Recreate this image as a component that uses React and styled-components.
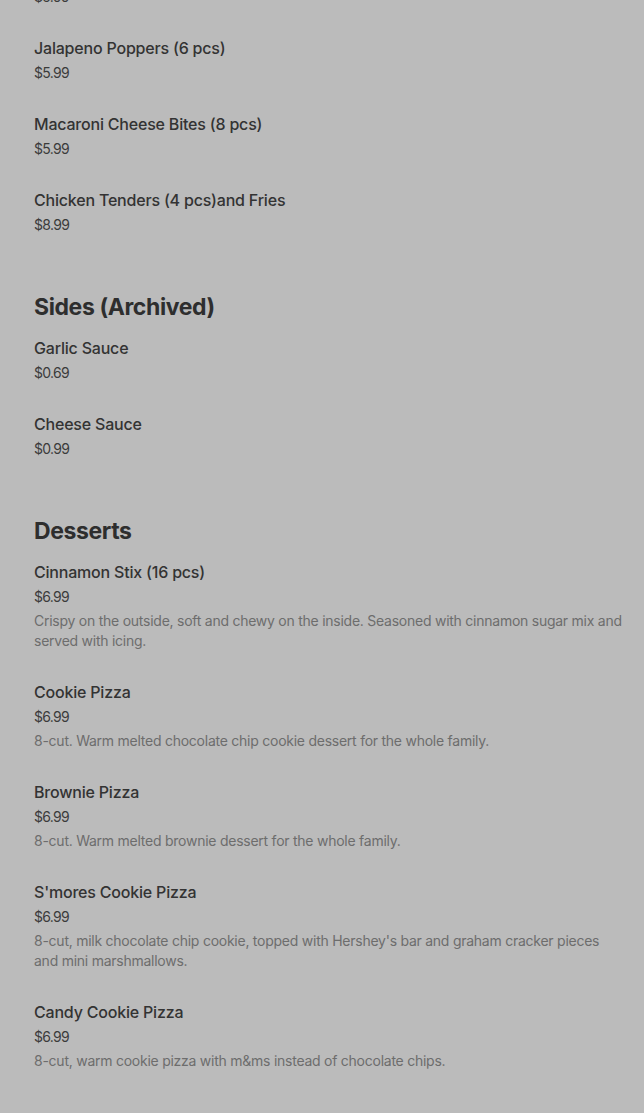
import React from "react";
import styled, { createGlobalStyle } from "styled-components";

const Global = createGlobalStyle`
  html, body { margin: 0; padding: 0; background: #bbbbbb; }
  body { font-family: Inter, "Noto Sans", sans-serif; -webkit-font-smoothing: antialiased; }
  #root { overflow: hidden; height: 1113px; }
`;

const Page = styled.main`
  display: flex;
  flex-direction: column;
  gap: 55px;
  padding: 0 19px 40px 34px;
  margin-top: -40px;
`;

const Section = styled.section`
  display: flex;
  flex-direction: column;
  gap: 14px;
`;

const Heading = styled.h2`
  margin: 0;
  font-size: 23px;
  line-height: 32px;
  font-weight: 700;
  letter-spacing: -0.4px;
  color: #2e2e2e;
  transform: translateY(1px);
`;

const List = styled.ul`
  list-style: none;
  margin: 0;
  padding: 0;
  display: flex;
  flex-direction: column;
  gap: 29px;
`;

const Item = styled.li`
  display: flex;
  flex-direction: column;
`;

const Name = styled.div`
  font-size: 16px;
  line-height: 24px;
  font-weight: 500;
  color: #333333;
  letter-spacing: -0.2px;
`;

const Price = styled.div`
  margin-top: 3px;
  font-size: 14px;
  line-height: 20px;
  color: #3b3b3b;
  letter-spacing: -0.7px;
`;

const Desc = styled.p`
  margin: 4px 0 0;
  font-size: 14px;
  line-height: 20px;
  color: #6d6d6d;
  letter-spacing: -0.25px;
`;

const sections = [
  {
    items: [
      { name: "Mozzarella Sticks (6 pcs)", price: "$5.99" },
      { name: "Jalapeno Poppers (6 pcs)", price: "$5.99" },
      { name: "Macaroni Cheese Bites (8 pcs)", price: "$5.99" },
      { name: "Chicken Tenders (4 pcs)and Fries", price: "$8.99" },
    ],
  },
  {
    title: "Sides (Archived)",
    items: [
      { name: "Garlic Sauce", price: "$0.69" },
      { name: "Cheese Sauce", price: "$0.99" },
    ],
  },
  {
    title: "Desserts",
    items: [
      {
        name: "Cinnamon Stix (16 pcs)",
        price: "$6.99",
        desc: "Crispy on the outside, soft and chewy on the inside. Seasoned with cinnamon sugar mix and served with icing.",
      },
      {
        name: "Cookie Pizza",
        price: "$6.99",
        desc: "8-cut. Warm melted chocolate chip cookie dessert for the whole family.",
      },
      {
        name: "Brownie Pizza",
        price: "$6.99",
        desc: "8-cut. Warm melted brownie dessert for the whole family.",
      },
      {
        name: "S'mores Cookie Pizza",
        price: "$6.99",
        desc: "8-cut, milk chocolate chip cookie, topped with Hershey's bar and graham cracker pieces and mini marshmallows.",
      },
      {
        name: "Candy Cookie Pizza",
        price: "$6.99",
        desc: "8-cut, warm cookie pizza with m&ms instead of chocolate chips.",
      },
    ],
  },
];

export default function App() {
  return (
    <>
      <Global />
      <Page>
        {sections.map((s, i) => (
          <Section key={i}>
            {s.title && <Heading>{s.title}</Heading>}
            <List>
              {s.items.map((it) => (
                <Item key={it.name}>
                  <Name>{it.name}</Name>
                  <Price>{it.price}</Price>
                  {it.desc && <Desc>{it.desc}</Desc>}
                </Item>
              ))}
            </List>
          </Section>
        ))}
      </Page>
    </>
  );
}
